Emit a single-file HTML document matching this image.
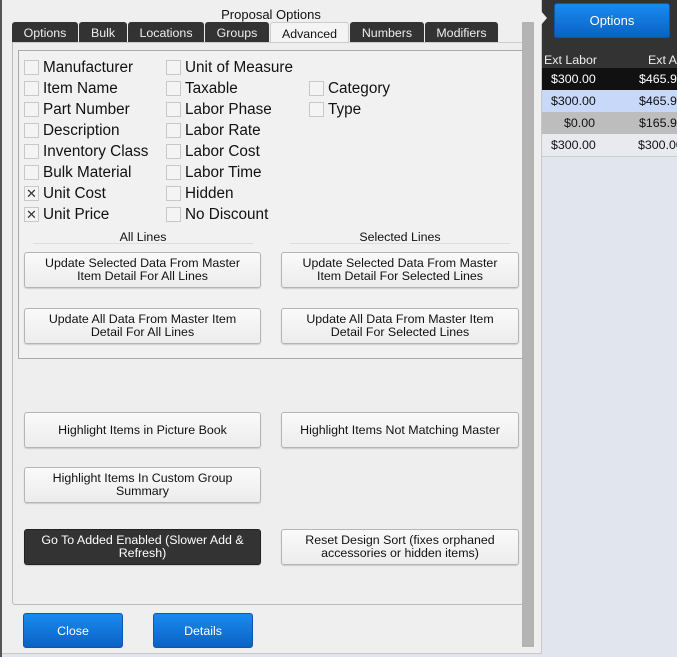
<html><head><style>
body{margin:0;width:677px;height:657px;position:relative;overflow:hidden;background:#e1e5ee;font-family:"Liberation Sans","DejaVu Sans",sans-serif}
.a{position:absolute}
.cb{position:absolute;width:13px;height:13px;border:1px solid #c8c8c8;background:#f4f4f4;font-size:13px;line-height:13px;text-align:center;color:#333}
.lb{position:absolute;font-size:15.3px;color:#111;line-height:16px}
.btn{position:absolute;border:1px solid #b5b5b5;border-radius:3px;background:linear-gradient(#fafafa,#ececec);font-size:12.4px;color:#111;text-align:center;display:flex;align-items:center;justify-content:center;line-height:13px;box-sizing:border-box;box-shadow:0 1px 1px rgba(0,0,0,.15)}
.tab{position:absolute;top:22px;height:20px;background:#333;color:#eee;font-size:12.4px;text-align:center;line-height:22px;border-radius:3px 3px 0 0;box-sizing:border-box}
.blue{position:absolute;background:linear-gradient(#1a8af0,#0a62c4);color:#fff;font-size:12.4px;display:flex;align-items:center;justify-content:center;border-radius:3px;border:1px solid #0a58b0;box-sizing:border-box}
.row{position:absolute;left:542px;width:135px;height:22px;font-size:12.4px;line-height:22px}
</style></head><body>
<div class="a" style="left:542px;top:0;width:135px;height:68px;background:#333"></div>
<div class="blue" style="left:554px;top:3px;width:116px;height:35px;font-size:13px">Options</div>
<div class="row" style="top:51px;height:17px;line-height:18px;color:#eee;border-bottom:1px solid #999"><span class="a" style="left:2px">Ext Labor</span><span class="a" style="left:106px">Ext A</span></div>
<div class="row" style="top:68px;background:#111;color:#fff"><span class="a" style="left:9px">$300.00</span><span class="a" style="left:97px">$465.9</span></div>
<div class="row" style="top:90px;background:#c8d8f8;color:#111"><span class="a" style="left:9px">$300.00</span><span class="a" style="left:97px">$465.9</span></div>
<div class="row" style="top:112px;background:#bdbdbd;color:#111"><span class="a" style="left:22px">$0.00</span><span class="a" style="left:97px">$165.95</span></div>
<div class="row" style="top:134px;background:#e8eaee;color:#111;border-bottom:1px solid #ccc"><span class="a" style="left:9px">$300.00</span><span class="a" style="left:96px">$300.00</span></div>
<div class="a" style="left:0;top:0;width:2px;height:657px;background:#555"></div>
<div class="a" style="left:2px;top:0;width:540px;height:654px;background:#efefef;border-right:1px solid #c8c8c8;border-bottom:1px solid #c8c8c8;box-sizing:border-box"></div>
<div class="a" style="left:535px;top:4px;width:0;height:0;border-top:14px solid transparent;border-bottom:14px solid transparent;border-left:12px solid #efefef"></div>
<div class="a" style="left:0;top:7px;width:542px;text-align:center;font-size:13px;color:#111">Proposal Options</div>
<div class="tab" style="left:12px;width:66px">Options</div>
<div class="tab" style="left:79px;width:48px">Bulk</div>
<div class="tab" style="left:128px;width:76px">Locations</div>
<div class="tab" style="left:205px;width:64px">Groups</div>
<div class="tab" style="left:270px;width:79px;background:#f4f4f4;color:#111;border:1px solid #ccc;border-bottom:none">Advanced</div>
<div class="tab" style="left:350px;width:74px">Numbers</div>
<div class="tab" style="left:425px;width:73px">Modifiers</div>
<div class="a" style="left:12px;top:42px;width:512px;height:563px;border:1px solid #bbb;border-top:1px solid #ccc;box-sizing:border-box;background:#eee;border-radius:0 0 3px 3px"></div>
<div class="a" style="left:18px;top:50px;width:506px;height:309px;border:1px solid #aaa;box-sizing:border-box;background:#f1f1f1"></div>
<div class="a" style="left:522px;top:22px;width:12px;height:625px;background:#b4b4b4"></div>

<div class="cb" style="left:24px;top:60px"></div><div class="lb" style="left:43px;top:60px">Manufacturer</div>
<div class="cb" style="left:24px;top:81px"></div><div class="lb" style="left:43px;top:81px">Item Name</div>
<div class="cb" style="left:24px;top:102px"></div><div class="lb" style="left:43px;top:102px">Part Number</div>
<div class="cb" style="left:24px;top:123px"></div><div class="lb" style="left:43px;top:123px">Description</div>
<div class="cb" style="left:24px;top:144px"></div><div class="lb" style="left:43px;top:144px">Inventory Class</div>
<div class="cb" style="left:24px;top:165px"></div><div class="lb" style="left:43px;top:165px">Bulk Material</div>
<div class="cb" style="left:24px;top:186px">✕</div><div class="lb" style="left:43px;top:186px">Unit Cost</div>
<div class="cb" style="left:24px;top:207px">✕</div><div class="lb" style="left:43px;top:207px">Unit Price</div>
<div class="cb" style="left:166px;top:60px"></div><div class="lb" style="left:185px;top:60px">Unit of Measure</div>
<div class="cb" style="left:166px;top:81px"></div><div class="lb" style="left:185px;top:81px">Taxable</div>
<div class="cb" style="left:166px;top:102px"></div><div class="lb" style="left:185px;top:102px">Labor Phase</div>
<div class="cb" style="left:166px;top:123px"></div><div class="lb" style="left:185px;top:123px">Labor Rate</div>
<div class="cb" style="left:166px;top:144px"></div><div class="lb" style="left:185px;top:144px">Labor Cost</div>
<div class="cb" style="left:166px;top:165px"></div><div class="lb" style="left:185px;top:165px">Labor Time</div>
<div class="cb" style="left:166px;top:186px"></div><div class="lb" style="left:185px;top:186px">Hidden</div>
<div class="cb" style="left:166px;top:207px"></div><div class="lb" style="left:185px;top:207px">No Discount</div>
<div class="cb" style="left:309px;top:81px"></div><div class="lb" style="left:328px;top:81px">Category</div>
<div class="cb" style="left:309px;top:102px"></div><div class="lb" style="left:328px;top:102px">Type</div>

<div class="a" style="left:33px;top:230px;width:220px;text-align:center;font-size:12.4px;color:#111">All Lines</div>
<div class="a" style="left:33px;top:243px;width:220px;height:1px;background:#ddd"></div>
<div class="a" style="left:290px;top:230px;width:220px;text-align:center;font-size:12.4px;color:#111">Selected Lines</div>
<div class="a" style="left:290px;top:243px;width:220px;height:1px;background:#ddd"></div>

<div class="btn" style="left:24px;top:252px;width:237px;height:36px">Update Selected Data From Master<br>Item Detail For All Lines</div>
<div class="btn" style="left:281px;top:252px;width:238px;height:36px">Update Selected Data From Master<br>Item Detail For Selected Lines</div>
<div class="btn" style="left:24px;top:308px;width:237px;height:36px">Update All Data From Master Item<br>Detail For All Lines</div>
<div class="btn" style="left:281px;top:308px;width:238px;height:36px">Update All Data From Master Item<br>Detail For Selected Lines</div>
<div class="btn" style="left:24px;top:412px;width:237px;height:36px">Highlight Items in Picture Book</div>
<div class="btn" style="left:281px;top:412px;width:238px;height:36px">Highlight Items Not Matching Master</div>
<div class="btn" style="left:24px;top:467px;width:237px;height:36px">Highlight Items In Custom Group<br>Summary</div>
<div class="btn" style="left:24px;top:529px;width:237px;height:36px;background:#333;color:#fff;border-color:#222">Go To Added Enabled (Slower Add &amp;<br>Refresh)</div>
<div class="btn" style="left:281px;top:529px;width:238px;height:36px">Reset Design Sort (fixes orphaned<br>accessories or hidden items)</div>
<div class="blue" style="left:23px;top:613px;width:100px;height:35px">Close</div>
<div class="blue" style="left:153px;top:613px;width:100px;height:35px">Details</div>
</body></html>
